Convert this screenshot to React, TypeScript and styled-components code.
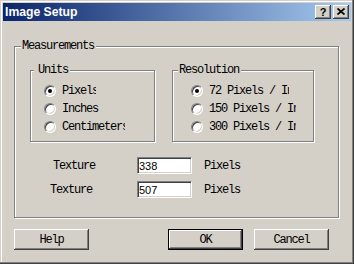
import styled, { createGlobalStyle } from "styled-components";

const MONO = `"Liberation Mono", "Courier New", monospace`;
const SANS = `"Liberation Sans", Arial, sans-serif`;

const GlobalStyle = createGlobalStyle`
  html, body {
    margin: 0;
    padding: 0;
    background: #d4d0c8;
  }
  body {
    width: 354px;
    height: 264px;
    overflow: hidden;
  }
`;

const units = [
  { label: "Pixels", width: 34, checked: true },
  { label: "Inches", width: 40 },
  { label: "Centimeters", width: 63 },
];

const resolutions = [
  { label: "72 Pixels / Inch", width: 80, checked: true },
  { label: "150 Pixels / Inch", width: 87 },
  { label: "300 Pixels / Inch", width: 87 },
];

function RadioOption({ label, width, checked }: { label: string; width: number; checked?: boolean }) {
  return (
    <RadioRow>
      <RadioMark $checked={checked} />
      <RadioLabel style={{ width }}>{label}</RadioLabel>
    </RadioRow>
  );
}

function App() {
  return (
    <>
      <GlobalStyle />
      <Window>
        <TitleBar>
          <TitleText>Image Setup</TitleText>
          <CaptionButtons>
            <CaptionButton>?</CaptionButton>
            <CaptionButton>
              <svg width="8" height="7" viewBox="0 0 8 7">
                <path d="M0.5 0.5 L7.5 6.5 M7.5 0.5 L0.5 6.5" stroke="#000" strokeWidth="1.7" />
              </svg>
            </CaptionButton>
          </CaptionButtons>
        </TitleBar>

        <Content>
          <GroupBox>
            <Legend $offset={6}>Measurements</Legend>
            <MeasureBody>
              <GroupsRow>
                <GroupBox>
                  <Legend $offset={3} $padLeft={4}>Units</Legend>
                  <RadioList $indent={13}>
                    {units.map((u) => (
                      <RadioOption key={u.label} {...u} />
                    ))}
                  </RadioList>
                </GroupBox>
                <GroupBox>
                  <Legend $offset={5}>Resolution</Legend>
                  <RadioList $indent={18}>
                    {resolutions.map((r) => (
                      <RadioOption key={r.label} {...r} />
                    ))}
                  </RadioList>
                </GroupBox>
              </GroupsRow>

              <TextureRows>
                <TextureRow>
                  <FieldLabel $indent={23}>Texture</FieldLabel>
                  <TextField readOnly defaultValue="338" />
                  <FieldLabel>Pixels</FieldLabel>
                </TextureRow>
                <TextureRow>
                  <FieldLabel $indent={20}>Texture</FieldLabel>
                  <TextField readOnly defaultValue="507" />
                  <FieldLabel>Pixels</FieldLabel>
                </TextureRow>
              </TextureRows>
            </MeasureBody>
          </GroupBox>

          <ButtonRow>
            <PushButton>Help</PushButton>
            <Spacer />
            <PushButton $default>OK</PushButton>
            <PushButton>Cancel</PushButton>
          </ButtonRow>
        </Content>
      </Window>
    </>
  );
}

const Window = styled.div`
  box-sizing: border-box;
  width: 354px;
  height: 264px;
  padding: 3px;
  background: #d4d0c8;
  box-shadow: inset -1px -1px 0 #404040, inset -2px -2px 0 #808080,
    inset 1px 1px 0 #d4d0c8, inset 2px 2px 0 #ffffff;
  display: flex;
  flex-direction: column;
`;

const TitleBar = styled.div`
  height: 18px;
  display: flex;
  align-items: center;
  padding: 0 2px;
  background: linear-gradient(to right, #0a246a, #a6caf0);
`;

const TitleText = styled.div`
  flex: 1;
  color: #ffffff;
  font: bold 12.2px ${SANS};
  white-space: nowrap;
`;

const CaptionButtons = styled.div`
  display: flex;
  gap: 2px;
`;

const CaptionButton = styled.div`
  box-sizing: border-box;
  width: 16px;
  height: 14px;
  display: flex;
  align-items: center;
  justify-content: center;
  background: #d4d0c8;
  box-shadow: inset -1px -1px 0 #404040, inset 1px 1px 0 #ffffff,
    inset -2px -2px 0 #808080;
  font: bold 11px ${SANS};
  color: #000;
  padding-bottom: 1px;
`;

const Content = styled.div`
  flex: 1;
  display: flex;
  flex-direction: column;
  padding: 19px 12px 0 11px;
`;

const GroupBox = styled.fieldset`
  margin: 0;
  padding: 0;
  min-width: 0;
  border: 1px solid #808080;
  box-shadow: 1px 1px 0 #ffffff, inset 1px 1px 0 #ffffff;
`;

const Legend = styled.legend<{ $offset: number; $padLeft?: number }>`
  margin-left: ${(p) => p.$offset}px;
  padding: 0 2px 0 ${(p) => p.$padLeft ?? 1}px;
  background: #d4d0c8;
  font: 12px/13px ${MONO};
  letter-spacing: -1.2px;
  color: #000;
`;

const MeasureBody = styled.div`
  padding: 11px 0 19px 15px;
`;

const GroupsRow = styled.div`
  display: grid;
  grid-template-columns: 125px 142px;
  column-gap: 17px;
`;

const RadioList = styled.div<{ $indent: number }>`
  padding: 5px 0 5px ${(p) => p.$indent}px;
`;

const RadioRow = styled.div`
  height: 18px;
  display: flex;
  align-items: center;
  gap: 6px;
`;

const RadioMark = styled.span<{ $checked?: boolean }>`
  box-sizing: border-box;
  flex: none;
  width: 12px;
  height: 12px;
  border-radius: 50%;
  border: 1px solid;
  border-color: #808080 #ffffff #ffffff #808080;
  background: #ffffff;
  box-shadow: inset 1px 1px 0 #404040, inset -1px -1px 0 #d4d0c8;
  display: flex;
  align-items: center;
  justify-content: center;

  &::after {
    content: "";
    width: 4px;
    height: 4px;
    border-radius: 50%;
    background: ${(p) => (p.$checked ? "#000" : "transparent")};
  }
`;

const RadioLabel = styled.span`
  overflow: hidden;
  white-space: nowrap;
  font: 12px ${MONO};
  letter-spacing: -1.2px;
  color: #000;
`;

const TextureRows = styled.div`
  margin-top: 15px;
  display: grid;
  row-gap: 7px;
`;

const TextureRow = styled.div`
  display: grid;
  grid-template-columns: 95px 55px auto;
  column-gap: 12px;
  align-items: center;
`;

const FieldLabel = styled.span<{ $indent?: number }>`
  padding-left: ${(p) => p.$indent ?? 0}px;
  font: 12px ${MONO};
  letter-spacing: -1.2px;
  color: #000;
  white-space: nowrap;
`;

const TextField = styled.input`
  box-sizing: border-box;
  width: 55px;
  height: 17px;
  margin: 0;
  padding: 0 0 0 1px;
  border: 1px solid;
  border-color: #808080 #ffffff #ffffff #808080;
  box-shadow: inset 1px 1px 0 #404040, inset -1px -1px 0 #d4d0c8;
  background: #ffffff;
  font: 11px ${SANS};
  color: #000;
  outline: none;
`;

const ButtonRow = styled.div`
  margin-top: 11px;
  display: flex;
  gap: 11px;
  padding-right: 10px;
`;

const Spacer = styled.div`
  flex: 1;
`;

const PushButton = styled.button<{ $default?: boolean }>`
  box-sizing: border-box;
  width: 75px;
  height: 21px;
  margin: 0;
  padding: 0;
  border: ${(p) => (p.$default ? "1px solid #000" : "none")};
  background: #d4d0c8;
  box-shadow: inset -1px -1px 0 #404040, inset 1px 1px 0 #ffffff,
    inset -2px -2px 0 #808080;
  font: 12px ${MONO};
  letter-spacing: -1.2px;
  color: #000;
  display: flex;
  align-items: center;
  justify-content: center;
`;

export default App;
